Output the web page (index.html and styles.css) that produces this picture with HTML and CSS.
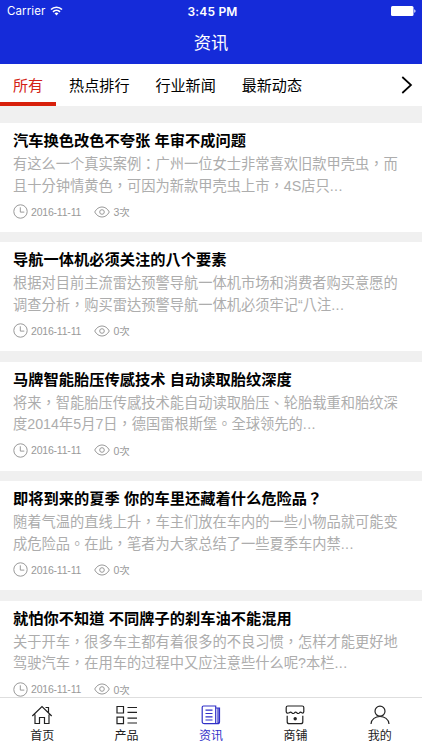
FILE: index.html
```html
<!DOCTYPE html>
<html lang="zh-TW">
<head>
    <meta charset="UTF-8">
    <meta name="viewport" content="width=device-width, initial-scale=1.0">
    <title>资讯</title>
    <link rel="stylesheet" href="styles.css">
</head>
<body>
    <!-- 图标 -->
    <svg class="symbols">
        <symbol id="clock" viewBox="0 0 15 15"><circle cx="7.5" cy="7.5" r="6.7"/><path d="M7.3 3.3v4.8h4"/></symbol>
        <symbol id="eye" viewBox="0 0 16 12"><path d="M.7 6C4.2-.7 11.8-.7 15.3 6 11.8 12.7 4.2 12.7.7 6z"/><circle cx="8" cy="6" r="2.3"/></symbol>
    </svg>
    <header>
        <div class="status">
            <span class="carrier">Carrier
                <svg class="wifi" viewBox="0 0 13 10"><path d="M1 3.5C4 .5 9 .5 12 3.5M3 5.8c2-2 5-2 7 0"/><path class="dot" d="M4.5 7.3c1.2-1 2.8-1 4 0l-2 2.2z"/></svg>
            </span>
            <span class="time">3:45 PM</span>
            <svg class="battery" viewBox="0 0 25 10"><rect width="22.5" height="10" rx="1.5"/><path d="M23.3 3.2c1.6.4 1.6 3.2 0 3.6z"/></svg>
        </div>
        <h1>资讯</h1>
    </header>
    <nav class="tabs">
        <a class="active">所有</a>
        <a>热点排行</a>
        <a>行业新闻</a>
        <a>最新动态</a>
        <svg class="more" viewBox="0 0 12 18"><path d="M1.3 1l8.7 8-8.7 8"/></svg>
    </nav>
    <main>
        <article>
            <h2>汽车换色改色不夸张 年审不成问题</h2>
            <p>有这么一个真实案例：广州一位女士非常喜欢旧款甲壳虫，而<br>且十分钟情黄色，可因为新款甲壳虫上市，4S店只<span class="dots">...</span></p>
            <div class="meta"><svg class="clock"><use href="#clock"/></svg><span class="date">2016-11-11</span><svg class="eye"><use href="#eye"/></svg><span>3次</span></div>
        </article>
        <article>
            <h2>导航一体机必须关注的八个要素</h2>
            <p>根据对目前主流雷达预警导航一体机市场和消费者购买意愿的<br>调查分析，购买雷达预警导航一体机必须牢记“八注<span class="dots">...</span></p>
            <div class="meta"><svg class="clock"><use href="#clock"/></svg><span class="date">2016-11-11</span><svg class="eye"><use href="#eye"/></svg><span>0次</span></div>
        </article>
        <article>
            <h2>马牌智能胎压传感技术 自动读取胎纹深度</h2>
            <p>将来，智能胎压传感技术能自动读取胎压、轮胎载重和胎纹深<br>度2014年5月7日，德国雷根斯堡。全球领先的<span class="dots">...</span></p>
            <div class="meta"><svg class="clock"><use href="#clock"/></svg><span class="date">2016-11-11</span><svg class="eye"><use href="#eye"/></svg><span>0次</span></div>
        </article>
        <article>
            <h2>即将到来的夏季 你的车里还藏着什么危险品？</h2>
            <p>随着气温的直线上升，车主们放在车内的一些小物品就可能变<br>成危险品。在此，笔者为大家总结了一些夏季车内禁<span class="dots">...</span></p>
            <div class="meta"><svg class="clock"><use href="#clock"/></svg><span class="date">2016-11-11</span><svg class="eye"><use href="#eye"/></svg><span>0次</span></div>
        </article>
        <article>
            <h2>就怕你不知道 不同牌子的刹车油不能混用</h2>
            <p>关于开车，很多车主都有着很多的不良习惯，怎样才能更好地<br>驾驶汽车，在用车的过程中又应注意些什么呢?本栏<span class="dots">...</span></p>
            <div class="meta"><svg class="clock"><use href="#clock"/></svg><span class="date">2016-11-11</span><svg class="eye"><use href="#eye"/></svg><span>0次</span></div>
        </article>
    </main>
    <footer>
        <a>
            <svg viewBox="0 0 22 20"><path d="M1.3 11L11 1.5l9.700 9.500M14.500 2.500h3v5M4 9.500v9h4.500v-6h5v6H18v-9"/></svg>
            <span>首页</span>
        </a>
        <a>
            <svg viewBox="0 0 22 20"><path d="M1 1.5h6.5V8H1zM1 12.2h6.5v6.5H1zM11.5 2.5H21M11.5 7.3H21M11.5 13.2H21M11.5 18H21"/></svg>
            <span>产品</span>
        </a>
        <a class="active">
            <svg viewBox="0 0 22 20"><path d="M3.5 1h12.200v17.700H4.500q-2.300 0-2.300-2.300V2.300Q2.200 1 3.500 1zM15.700 3h3.800v13.700q0 2-2 2h-2M18 3.500v14.500M5.500 5.200h7M5.500 8.500h7M5.500 11.800h7M5.500 15h7"/></svg>
            <span>资讯</span>
        </a>
        <a>
            <svg viewBox="0 0 22 20"><path d="M3.800 1h14.400q1.600 0 1.600 1.600v4q-.3 2-2 1.200-1.300-1.300-2.400 0-1.300 1.400-2.500 0-1.300-1.300-2.500 0-1.300 1.400-2.500 0-1.300-1.300-2.500 0Q2.500 9 2.200 6.600v-4Q2.200 1 3.800 1zM3.200 10.700v6q0 2 2 2h11.600q2 0 2-2v-6"/><circle class="dot" cx="11.2" cy="13.7" r="1.7"/></svg>
            <span>商铺</span>
        </a>
        <a>
            <svg viewBox="0 0 22 20"><circle cx="11" cy="6.2" r="5"/><path d="M2 19c.5-10 17.500-10 18 0"/></svg>
            <span>我的</span>
        </a>
    </footer>
</body>
</html>
```
FILE: styles.css
```css
* {
    box-sizing: border-box;
}
body {
    font-family: "Liberation Sans", "Noto Sans CJK TC", sans-serif;
    margin: 0;
    height: 750px;
    display: flex;
    flex-direction: column;
    overflow: hidden;
    background-color: #f0f0f0;
    color: #000;
}
svg {
    display: block;
    flex: none;
    fill: none;
    stroke: currentColor;
}
.symbols {
    display: none;
}
header {
    height: 64px;
    flex: none;
    background-color: #152bd9;
    color: white;
}
.status {
    display: grid;
    grid-template-columns: 1fr auto 1fr;
    align-items: center;
    height: 22px;
    padding: 0 6px 0 7px;
    font-family: Inter, sans-serif;
    font-size: 12px;
}
.carrier {
    display: flex;
    align-items: center;
    gap: 5px;
    font-size: 11.5px;
    letter-spacing: 0.1px;
}
.wifi {
    width: 13px;
    height: 10px;
    stroke-width: 1.7;
}
.dot {
    fill: currentColor;
    stroke: none;
}
.time {
    position: relative;
    left: 1px;
    font-weight: 600;
    letter-spacing: 0.2px;
}
.battery {
    width: 25px;
    height: 10px;
    justify-self: end;
    fill: white;
    stroke: none;
}
h1 {
    margin: 0;
    font-size: 17.3px;
    font-weight: 400;
    line-height: 43px;
    text-align: center;
}
/* 分类标签 */
.tabs {
    display: flex;
    flex: none;
    height: 42px;
    background-color: white;
    font-size: 15.1px;
    line-height: 44px;
}
.tabs a {
    padding: 0 12.900px 0 13px;
}
.tabs .active {
    color: #d32216;
    border-bottom: 4px solid #d8200c;
}
.more {
    width: 12px;
    height: 18px;
    margin: 12px 9px 0 auto;
    stroke-width: 1.7;
}
/* 资讯列表 */
main {
    flex: 1;
    min-height: 0;
    overflow: hidden;
    padding-top: 17px;
}
article {
    height: 108.900px;
    margin-bottom: 10.500px;
    padding: 6px 13px 0;
    background-color: white;
}
h2 {
    margin: 0;
    font-size: 15.25px;
    font-weight: 700;
    line-height: 23px;
    white-space: nowrap;
}
article p {
    margin: 2px 0 0;
    color: #adadad;
    font-size: 14.25px;
    line-height: 21.500px;
    white-space: nowrap;
}
.dots {
    letter-spacing: 0.4px;
}
.meta {
    display: flex;
    align-items: center;
    height: 16px;
    margin-top: 6.500px;
    color: #999;
    font-size: 10.5px;
}
.clock {
    width: 15px;
    height: 15px;
    margin-right: 3px;
}
.eye {
    width: 16px;
    height: 12px;
    margin: 0 4px 0 12px;
}
.date {
    width: 50.500px;
    letter-spacing: -0.2px;
}
/* 底部导航 */
footer {
    display: flex;
    flex: none;
    height: 53px;
    border-top: 1px solid #dedede;
    background-color: white;
}
footer a {
    flex: 1;
    display: flex;
    flex-direction: column;
    align-items: center;
    padding-top: 7px;
    color: #222;
    font-size: 12px;
    line-height: 23px;
}
footer svg {
    width: 22px;
    height: 20px;
    stroke-width: 1.2;
}
footer .active {
    color: #3030c8;
}
```
